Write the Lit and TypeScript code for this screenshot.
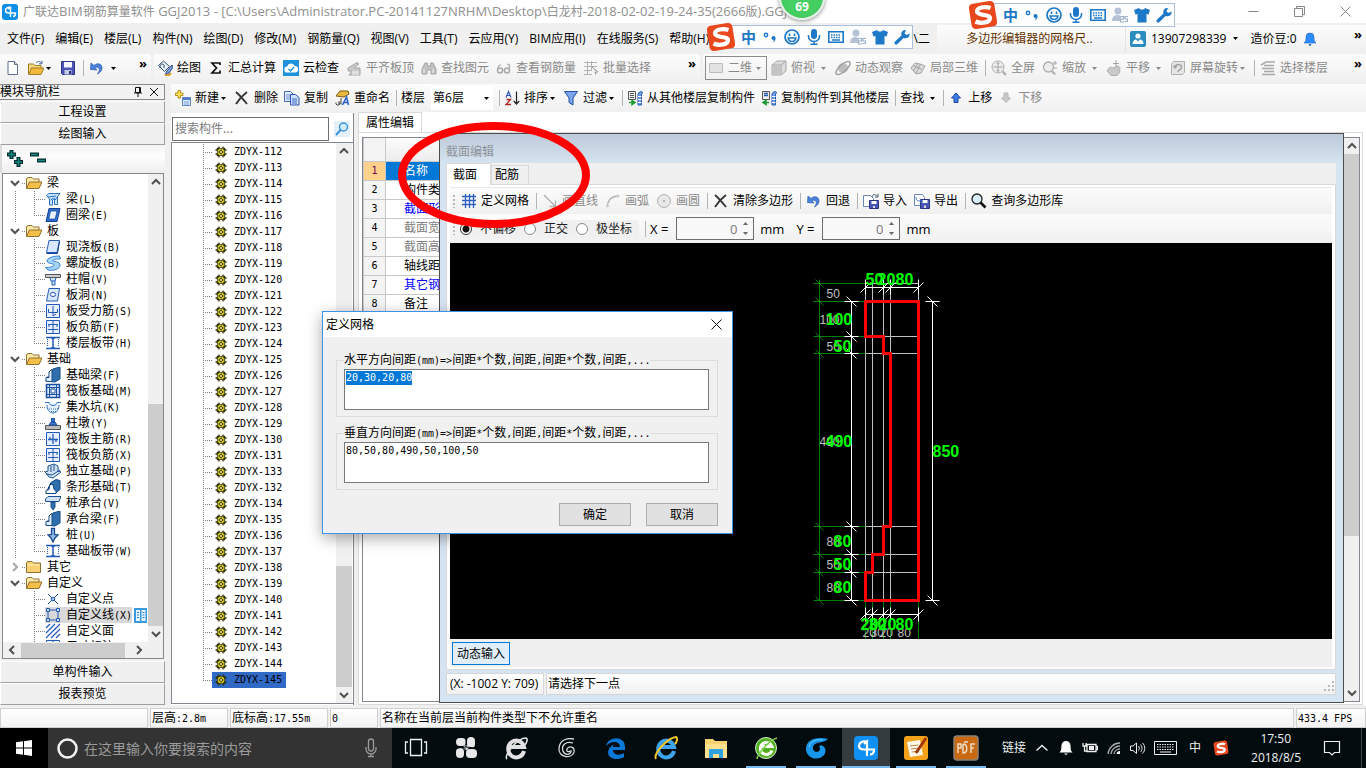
import { LitElement, html, css, svg, nothing } from "lit";
import { customElement } from "lit/decorators.js";
import { classMap } from "lit/directives/class-map.js";

const glyphs: Record<string, any> = {
  app: svg`<rect width="16" height="16" rx="3" fill="#0d8fe8"/><path d="M8.500 13V3.500L6 5M8.500 3.500C6 3 3.500 4 3.500 6.500S5 9 7 9h6.500c0 2-1 3.500-2.500 3.500" fill="none" stroke="#fff" stroke-width="1.500"/>`,
  doc: svg`<path d="M3 1.500h6.500l3 3v10H3z" fill="#fff" stroke="#5b6f8c"/><path d="M9.500 1.500v3h3" fill="#c9d9ee" stroke="#5b6f8c"/>`,
  open: svg`<path d="M.5 14V4h5l1.500 1.500h6V8" fill="#f7d884" stroke="#a37a20"/><path d="M.7 14.500 3.500 8H16l-3 6.500z" fill="#f0b93c" stroke="#a37a20"/><path d="M8 3c2-2 4-2 5.500 0M14 .800v3h-3" fill="none" stroke="#44649a"/>`,
  save: svg`<path d="M1.500 1.500h13v13h-12l-1-1z" fill="#4b55b5" stroke="#2c3482"/><path d="M4 2h8v5.500H4z" fill="#f4f6ff"/><path d="M4.500 10h7v4.500h-7z" fill="#c7cbe8"/><path d="M9 11h2v3H9z" fill="#2c3482"/>`,
  undo: svg`<path d="M5 5.500c4-3.500 8.500-1 8 3-.3 2.500-2 4-4.500 5.500 1.500-2.500 3-5 .5-6.500-1.500-.8-3 .2-3 .2L8 10 1.500 9.500 2 3z" fill="#4a82dc" stroke="#2b58ad" stroke-width=".7"/>`,
  paint: svg`<path d="M1.500 5.500 6.500 1l6 5.500-5 5z" fill="#e6eef7" stroke="#37506e"/><path d="M3 8c0-4 2-5 4-3v3" fill="none" stroke="#37506e"/><path d="m15 5-5 6-2 4 4-2 4-6z" fill="#7da2e3" stroke="#2a4a8a"/><path d="M8 15c3 .8 5 0 6-2" stroke="#d89c28" stroke-width="2" fill="none"/>`,
  sigma: svg`<path d="M12 5V3H4l4.500 5L4 13h8v-2.500" fill="none" stroke="#111" stroke-width="1.700"/>`,
  cloud: svg`<path d="M0 0h16v16H0z" fill="#1e93dc"/><path d="M4.500 12.500a3 3 0 0 1-.3-6A4 4 0 0 1 11.800 6a3.200 3.200 0 0 1 0 6.500z" fill="#fff"/><path d="m5.500 9 2 2 3.500-4" fill="none" stroke="#1e93dc" stroke-width="1.400"/>`,
  slab: svg`<path d="m2 8 9-5.500 2 1.500-5 4h6v7H3l3-4H2z" fill="#c9c9c9" stroke="#a5a5a5"/><path d="M6 12h7M6 14h7" stroke="#f3f3f3"/>`,
  binoc: svg`<path d="M4 3h2.500v3h3V3H12l3 6v5h-5v-4H6v4H1V9z" fill="#c2c2c2" stroke="#a4a4a4"/><path d="M3 9v4M12 9v4" stroke="#eee"/>`,
  glasses: svg`<circle cx="4" cy="10.500" r="2.500" fill="none" stroke="#aaa" stroke-width="1.500"/><circle cx="11" cy="10.500" r="2.500" fill="none" stroke="#aaa" stroke-width="1.500"/><path d="M2 9c0-3 1-4 3-4.500M13.500 11V5L11 4M6.500 10h2" fill="none" stroke="#aaa" stroke-width="1.200"/>`,
  batch: svg`<path d="M1 2.500h13M1 6.500h13M1 10.500h8M1 14.500h8M4.500 1v14M8.500 1v9" stroke="#b2b2b2" fill="none"/><path d="m9 7 6 5-3 .3 1 2.500" stroke="#999" fill="#e5e5e5"/>`,
  flat: svg`<path d="M1.500 3.500h13v9h-13z" fill="#e2e2e2" stroke="#bcbcbc"/>`,
  cube: svg`<path d="M1 5 6 1h9v10l-5 4H1z" fill="#dcdcdc" stroke="#a8a8a8"/><path d="M1 5h9v10M10 5l5-4" fill="none" stroke="#a8a8a8"/><path d="M1 5h9v10H1z" fill="#c4c4c4"/>`,
  orbit: svg`<circle cx="8" cy="8" r="5" fill="#bdbdbd"/><ellipse cx="8" cy="8" rx="9" ry="3.500" transform="rotate(-42 8 8)" fill="none" stroke="#a3a3a3" stroke-width="1.500"/>`,
  local: svg`<path d="m1 8 4-5 5 1 5 2-4 7-5 1z" fill="#dcdcdc" stroke="#a2a2a2"/><path d="m3 5.500 9 4M6 13.500 10.500 4M8 3.500 3.500 11" stroke="#a2a2a2" fill="none"/>`,
  full: svg`<circle cx="7" cy="7" r="6" fill="#ededed" stroke="#adadad"/><path d="M7 2.500v9M2.500 7h9M5.500 4 7 2.500 8.500 4M5.500 10 7 11.500 8.500 10" stroke="#a5a5a5" fill="none"/><path d="m11.500 11.500 3.500 3.500" stroke="#b5b5b5" stroke-width="2.500"/>`,
  zoom: svg`<circle cx="6.500" cy="7" r="5" fill="#ededed" stroke="#adadad" stroke-width="1.300"/><path d="m10 11 3 3.500" stroke="#b5b5b5" stroke-width="2.500"/><path d="M11 3h4M13 1v4M11 8h4" stroke="#a5a5a5"/>`,
  pan: svg`<path d="M3 8c2-2 3 0 4 0l5-2c3 1 1 4 2 6l-3 3.500H5L1 11z" fill="#c9c9c9" stroke="#adadad"/><path d="M10 0v7M7 3.500h6" stroke="#a5a5a5"/>`,
  rot: svg`<path d="M1.500 3.500 4 1.500h10.500v11l-2 2h-11z" fill="#e5e5e5" stroke="#b0b0b0"/><path d="M5 7c1-4 7-3 6.500.5C11 10 8 10 8 12M3.500 5.500 5 8l2-2" fill="none" stroke="#a3a3a3" stroke-width="1.500"/>`,
  floor: svg`<path d="m1 5 5-3h9M4 5.500h10M2 8.500h12M4 11.500h10M2 14.500h13" stroke="#a8a8a8" stroke-width="1.500" fill="none"/>`,
  add: svg`<path d="M7.500 7.500h8v8h-8z" fill="#dce9fb" stroke="#5f84c4"/><path d="M8 8h7v2H8z" fill="#4f7ed0"/><path d="M9 12h5M9 14h5" stroke="#7c9fd8"/><path d="M3 .5h2.500v2.500H8v2.500H5.500V8H3V5.500H.5V3H3z" fill="#ffe457" stroke="#a78612" stroke-width=".9"/>`,
  del: svg`<path d="M2 2c4 3.500 7 7 11 12M13 2C9 5 5 9 2 14" stroke="#333" stroke-width="1.800" fill="none"/>`,
  copy: svg`<path d="M.5 1.500h6l3 3v7h-9z" fill="#e3eeff" stroke="#4268b8"/><path d="M2 5h5M2 7h5M2 9h4" stroke="#6a8fd8"/><path d="M6.500 4.500h5l3.500 3v7.500H6.500z" fill="#cfe0fb" stroke="#2d55a8"/><path d="M8 9h5M8 11h5M8 13h5" stroke="#3f6cc4"/>`,
  rename: svg`<path d="m2 6 4-5h8l1 3-5 3z" fill="#e8b93c" stroke="#7b5c17"/><path d="M2 12.500a2 2 0 1 0 3-1v3.500M7 8v6.500" stroke="#444" fill="none"/><path d="m8.500 15 4-8 2 8M10 12.500h4" stroke="#2a5fc8" stroke-width="1.500" fill="none"/>`,
  sort: svg`<path d="m2 7.500 2.500-6L7 7.500M3 5.500h3" stroke="#2d56b0" stroke-width="1.200" fill="none"/><path d="M2.500 9.500h4l-4.500 5h5" stroke="#a82424" stroke-width="1.300" fill="none"/><path d="M12.500 1.500v12M9.800 11l2.700 3 2.700-3" stroke="#222" stroke-width="1.200" fill="none"/>`,
  filter: svg`<path d="M1.500 1.500h13L10 8v7l-4-2.500V8z" fill="#7ba6ee" stroke="#24509e"/>`,
  fromf: svg`<path d="M1.500 1.500h7v8h-7z" fill="#eee" stroke="#555"/><path d="M3 3.500h4M3 5.500h4M3 7.500h4" stroke="#555"/><path d="M11 4c1-3 5-3 4.500-1l-1 1v11H11z" fill="#6fa0e6" stroke="#2a5db0"/><path d="M11 6.500h3.500M11 9.500h3.500M11 12.500h3.500" stroke="#fff"/><path d="M2 12.500h4M5 10.500v4l3-2z" fill="#1f9d35" stroke="#1f9d35" stroke-width="1.500"/>`,
  tof: svg`<path d="M1.500 1.500h7v8h-7z" fill="#eee" stroke="#555"/><path d="M3 3.500h4M3 5.500h4" stroke="#2a5db0" stroke-width="1.400"/><path d="M11 4c1-3 5-3 4.500-1l-1 1v11H11z" fill="#6fa0e6" stroke="#2a5db0"/><path d="M11 6.500h3.500M11 9.500h3.500M11 12.500h3.500" stroke="#fff"/><path d="M4 12.500h4M5 10.500v4l-3-2z" fill="#1f9d35" stroke="#1f9d35" stroke-width="1.500"/>`,
  up: svg`<path d="M8 3 3.500 8H6v4.500h4V8h2.500z" fill="#3f7be0" stroke="#1d4aa5"/>`,
  down: svg`<path d="M8 12.500 3.500 8H6V3h4v5h2.500z" fill="#c9c9c9" stroke="#b5b5b5"/>`,
  search: svg`<path d="M0 0h16v16H0z" fill="#e4f1fb"/><circle cx="9.500" cy="6" r="4" fill="#d5ecff" stroke="#3c93da" stroke-width="1.500"/><path d="m6.500 9-4.500 5" stroke="#3c93da" stroke-width="2"/>`,
  grid: svg`<path d="M1 3.500h14M1 7.500h14M1 11.500h14M4.500 1v14M8.500 1v14M12.500 1v14" stroke="#2f62c0" stroke-width="1.300" fill="none"/>`,
  line: svg`<path d="m2 2 11 11M13.500 7.500v6h-6" stroke="#b0b0b0" stroke-width="1.300" fill="none"/>`,
  arc: svg`<path d="M2 14C3 7 7 3 13 3" stroke="#b0b0b0" stroke-width="1.300" fill="none"/><circle cx="2.500" cy="13" r="1.500" fill="#ccc"/><circle cx="13" cy="3" r="1.500" fill="#ccc"/>`,
  circ: svg`<circle cx="8" cy="8" r="6.500" fill="#e8e8e8" stroke="#b0b0b0"/><circle cx="8" cy="8" r="1" fill="#999"/>`,
  imp: svg`<path d="M.5 2.500h7l3 3v8H.5z" fill="#fff" stroke="#6c88b8"/><path d="M6.500 7.500h9v8h-9z" fill="#4b55b5" stroke="#2c3482"/><path d="M8.500 8h5v3h-5z" fill="#fff"/><path d="M10 13h2v2h-2z" fill="#ddd"/><path d="M9 4c1-3 3-3 5-1M15 .800V4h-3" stroke="#44546a" fill="none"/>`,
  exp: svg`<path d="M.5 1.500h8l2 3v8H.5z" fill="#fff" stroke="#6c88b8"/><path d="M6.500 6.500h9v9h-9z" fill="#4b55b5" stroke="#2c3482"/><path d="M8.500 7h5v3h-5z" fill="#fff"/><path d="M10 12.500h2V15h-2z" fill="#ddd"/><path d="M2 4c0 4 2 4 6 4M6 5.500 8.500 8 6 10.500" stroke="#3f6cc4" fill="none"/>`,
  lens: svg`<circle cx="6" cy="6" r="5" fill="#d9edfa" stroke="#222" stroke-width="1.300"/><path d="m9.500 9.500 5 5" stroke="#111" stroke-width="2.600"/>`,
  folder: svg`<path d="M.5 13.500v-10L2 2.500h4l1.500 1.500H13v3" fill="#fbe7a6" stroke="#8f7130"/><path d="M.5 13.500 3.500 7H16l-3 6.500z" fill="#f4c04a" stroke="#8f7130"/>`,
  folderc: svg`<path d="M.5 13.500v-10L2 2.500h4l1.500 1.500h7v9.500z" fill="#f8d071" stroke="#8f7130"/><path d="M1.500 6h12" stroke="#fff0bd"/>`,
  beam: svg`<path d="M1.500 4.500 4 2.500h11l-2.500 3v8h-3v-6l-2 1.500v5h-3V8z" fill="#cfe5fb" stroke="#2471c4"/><path d="m3 6 8-1M5.500 9l3-2M10 9l3-4" stroke="#2471c4"/>`,
  ring: svg`<path d="M4 1.500h11l-3 13H1z" fill="#2e6fd0" stroke="#123e94"/><path d="M5.500 4h6.500l-1.800 8H3.800z" fill="#eaf3ff" stroke="#123e94" stroke-width=".7"/>`,
  plate: svg`<path d="M4 1.500h10.500l-2.500 12H1.500z" fill="#d7e8ff" stroke="#2459ba"/><path d="M1.500 14.500h11l2-12" stroke="#123e94" fill="none"/>`,
  spiral: svg`<path d="M14.500 1C8 1 2 3 2 6s7 2 7 4-5 2.500-8.500 2.500L3 15c6 1 12-1 12-5S8 7 8 5.500 12 4 15.500 4z" fill="#a9d4fa" stroke="#2f7fd2"/>`,
  cap: svg`<path d="M.5 3.500h15v3H.5z" fill="#ccc" stroke="#555"/><path d="m5 7 1 3h4l1-3M7 10v4h3v-4" fill="#cfe5fb" stroke="#1f5fc0"/>`,
  hole: svg`<path d="M4 1.500h10.500l-2 12.500H1.500z" fill="#d7e8ff" stroke="#2459ba"/><ellipse cx="8" cy="7.500" rx="2.700" ry="2" fill="#fff" stroke="#2459ba"/>`,
  rebar: svg`<path d="M1.500 1.500h13v13h-13z" fill="#e6f0ff" stroke="#2459ba"/><path d="M8 3v10M3.500 6v3.500h9V6M8 13l3-2" stroke="#2459ba" fill="none"/>`,
  rebar2: svg`<path d="M1.500 1.500h13v13h-13z" fill="#e6f0ff" stroke="#2459ba"/><path d="M8 2v12M3 5.500h10M3 10.500h10M4 5v3M12 5v3" stroke="#2459ba" fill="none"/>`,
  strip: svg`<path d="M1 2.500h14M1 13.500h14" stroke="#2459ba" stroke-width="1.500"/><path d="M8 3v10M6 3h4M6 13h4" stroke="#2459ba" stroke-width="1.500"/><path d="M2.500 4v8M13.500 4v8" stroke="#2459ba" stroke-dasharray="1 1"/>`,
  fbeam: svg`<path d="m1 14 1-4h3l3-8 7-2v12l-5 3z" fill="#2f6fae" stroke="#164a86"/><path d="M1 14.500v-4h3V5l3-3v12.500z" fill="#e3eefb" stroke="#164a86"/>`,
  raft: svg`<path d="M1.500 1.500h13v13h-13z" fill="#d7e8ff" stroke="#1c4f9e" stroke-width="1.500"/><path d="M4.500 2v12M11.500 2v12M2 4.500h12M2 11.500h12" stroke="#1c4f9e"/><path d="M6 6h4v4H6z" fill="#fff" stroke="#1c4f9e"/>`,
  pit: svg`<path d="M0 3.500h4c0 4 8 4 8 0h4M2 6c0 4 2 8 6 8s6-4 6-8" fill="#e4f0ff" stroke="#2f6fc4"/><path d="M4 10h9M6 12.500h5" stroke="#2f6fc4" stroke-dasharray="1 1"/>`,
  pier: svg`<path d="M.5 10.500h15v4H.5z" fill="#bbb" stroke="#555"/><path d="m4 10 2-3h4l2 3zM6.500 3.500h3V7h-3z" fill="#3d78d4" stroke="#1c4f9e"/>`,
  bars: svg`<path d="M1.500 1.500h13v13h-13z" fill="#e6f0ff" stroke="#2459ba"/><path d="M8 3v10M3 8.500h10M5 6v2M11 8v3" stroke="#2459ba" stroke-width="1.300" fill="none"/>`,
  single: svg`<path d="m0 9 3-1V3l6-2 4 2v5l3 1-8 6-4-1z" fill="#cfe2f5" stroke="#1d4f8c"/><path d="m1 11 6 1 8-5M6 3v6M9 2v6" stroke="#1d4f8c" fill="none"/>`,
  stripf: svg`<path d="m1 14.500 2-5 3-6 5-3 4 1v9l-5 4z" fill="#2f6fae" stroke="#164a86"/><path d="M1 14.500v-3l3-1 1-5h3l1 5 2 1v3z" fill="#fff" stroke="#164a86"/>`,
  pcap: svg`<path d="M.5 4 3 1.500h13L14 6.500H.5z" fill="#cfe2f5" stroke="#1d4f8c"/><path d="M6 7h4v5l-2 3-2-3z" fill="#2f6fae" stroke="#164a86"/>`,
  pile: svg`<path d="M6.500 1.500h3v6l3.500.5-3 3-2 4-2-4-3-3 3.500-.5z" fill="#8fb8e4" stroke="#174b8c" stroke-width="1.300"/>`,
  pt: svg`<path d="m3 3 4 4M13 3 9 7M3 13l4-4M13 13 9 9" stroke="#174b8c"/><circle cx="8" cy="8" r="1.800" fill="#9cc8f5" stroke="#2459ba"/>`,
  poly: svg`<path d="M3 3h10v10H3z" fill="none" stroke="#2459ba"/><path d="M1.500 1.500h3v3h-3zM11.500 1.500h3v3h-3zM1.500 11.500h3v3h-3zM11.500 11.500h3v3h-3z" fill="#cfe2ff" stroke="#2459ba"/>`,
  hatch: svg`<path d="m1 5 4-4M1 10 10 1M1 15 15 1M6 15l9-9M11 15l4-4" stroke="#2459ba" fill="none" stroke-width="1.200"/>`,
  gear: svg`<path d="M6 2.500v11M10 2.500v11M2.500 6h11M2.500 10h11M4 4l8 8M12 4l-8 8" stroke="#2b2900" stroke-width="1.300"/><circle cx="8" cy="8" r="3.800" fill="#e9e11a" stroke="#2b2900" stroke-width=".8"/><path d="M8 4.500v7M4.500 8h7" stroke="#6d6800" stroke-width=".8"/><circle cx="8" cy="8" r="1.500" fill="#fff78a" stroke="#2b2900" stroke-width=".9"/>`,
  user: svg`<rect width="16" height="16" rx="2" fill="#2b8cbf"/><circle cx="8" cy="5" r="2.600" fill="#fff"/><path d="M2.500 13c0-3 2-4.500 3.500-4.500l2 2 2-2c2 0 3.500 1.500 3.500 4.500z" fill="#fff"/>`,
  bell: svg`<path d="M2 12c2-1.500 2-3 2-6a4 4 0 0 1 8 0c0 3 0 4.500 2 6z" fill="#2b8cff" stroke="#1c62c0" stroke-width=".6"/><path d="M6.500 13h3l-1.500 2.500z" fill="#1c62c0"/>`,
};

const blue = "#1e78c8";
const ime: Record<string, any> = {
  punc: svg`<circle cx="4" cy="6" r="1.700" fill="none" stroke=${blue} stroke-width="1.400"/><circle cx="11.500" cy="9" r="2" fill=${blue}/><path d="M13.500 9c0 3-1.500 4-3 4.500 1-1 1.500-2 1.300-3z" fill=${blue}/>`,
  smile: svg`<circle cx="8" cy="8" r="7" fill="none" stroke=${blue} stroke-width="1.700"/><path d="M5.500 4.500v2.500M10.500 4.500v2.500" stroke=${blue} stroke-width="1.600"/><path d="M4 9c1 4.500 7 4.500 8 0z" fill="none" stroke=${blue} stroke-width="1.400"/>`,
  mic: svg`<rect x="5" y="0" width="6" height="10" rx="3" fill=${blue}/><path d="M2.500 6v1.500a5.500 5 0 0 0 11 0V6M8 12.500V15M4.500 15.300h7" fill="none" stroke=${blue} stroke-width="1.500"/>`,
  keys: svg`<path d="M.8 2.800h14.400v10.400H.8z" fill="none" stroke=${blue} stroke-width="1.600"/><path d="M3 6h10M3 8.500h10" stroke=${blue} stroke-width="1.500" stroke-dasharray="1.500 1"/><path d="M4 11h8" stroke=${blue} stroke-width="1.500"/>`,
  who: svg`<circle cx="6" cy="4" r="3.500" fill="#b6c3d6"/><path d="M0 14c0-5 3-6 6-6l3 1v5z" fill="#b6c3d6"/><path d="M8.500 9.500h3v2.500h-3V15h3.500M16 9.500h-3V12h2.500v2.500H12.500" stroke="#9eb0c8" fill="none" stroke-width="1.200"/>`,
  shirt: svg`<path d="M0 3 5 1c1 2 5 2 6 0l5 2-1.500 4.500L12.500 7v8.500h-9V7l-2 .5z" fill=${blue}/>`,
  wrench: svg`<path d="M15.500 4.500 12.500 6 10.500 4.500 12 1C8.500.5 6.500 3.500 7.500 6.500L1 12.500c-1.500 2 .5 4 2.500 2.500L9.500 9c3.500 1 6.500-1 6-4.500z" fill=${blue}/>`,
};
const sogou = svg`<rect x="2" y="2" width="24" height="24" rx="4" transform="rotate(-9 14 14)" fill="#e8481c"/><path d="M21 7.500C16 5.500 8 7 8.500 11s12 2 12 6-8 5.500-13.500 3" fill="none" stroke="#fff" stroke-width="4"/>`;

const task: Record<string, any> = {
  view: svg`<path d="M7.500 4.500h11v16h-11zM5 7H2.500v11H5M21 7h2.500v11H21" fill="none" stroke="#eee" stroke-width="1.300"/>`,
  petal: svg`<g fill="#e8e8e8"><rect x="3" y="3" width="10" height="8" rx="4"/><rect x="14" y="2" width="8" height="11" rx="4"/><rect x="3" y="13" width="8" height="10" rx="4"/><rect x="13" y="14" width="11" height="9" rx="4"/></g><circle cx="13" cy="12.500" r="2.500" fill="#e8e8e8"/><path d="M13 3v9l-9 1M13 12l9 1M12 13v10" stroke="#000c10" fill="none"/>`,
  ie: svg`<path d="M21 16A8 8.500 0 1 1 21 12H7" fill="none" stroke="#e2e2e2" stroke-width="4"/><path d="M4 24C0 21 14 3 23 3c2 1 1 4-1 7" fill="none" stroke="#e2e2e2" stroke-width="1.600"/>`,
  swirl: svg`<path d="M21 4c-6-1-14 0-15 9s12 12 15 4c1-5-5-7-7-3-1 3 2 3 3 2M20 8c-7-2-12 2-10 8 2 5 9 4 8-1" fill="none" stroke="#ddd" stroke-width="1.300"/>`,
  edge: svg`<path d="M3 11C5 1 22 0 22 12v3H10c0 5 7 6 11 3v4C12 27 2 22 6 14c1-2 3-4 6-5-2 1-2 2-2 3h7c0-6-9-7-14-1z" fill="#0a78d7"/>`,
  ie2: svg`<path d="M21 16A8 8.500 0 1 1 21 12H7" fill="none" stroke="#3fa2ec" stroke-width="4"/><path d="M3 24C0 19 14 3 23 2c2 1 1 5-1 7" fill="none" stroke="#f3c62c" stroke-width="2"/>`,
  files: svg`<path d="M2 4h8l2 2h12v17H2z" fill="#f7d36f"/><path d="M2 9h22v14H2z" fill="#fde08e"/><path d="M6 14h14v9h-4v-4h-6v4H6z" fill="#2fa3df"/>`,
  green: svg`<circle cx="13" cy="13" r="10.500" fill="#4fae22" stroke="#d7f0c8"/><path d="M19 15.500a6 6 0 1 1 0-4H8" fill="none" stroke="#fff" stroke-width="3"/><path d="M4 24c0-4 12-19 20-21" stroke="#7ad04a" stroke-width="1.500" fill="none"/>`,
  gblue: svg`<path d="M25 4C14 1 3 4 3 14c0 9 12 13 18 6 4-6-1-11-5-9 2 2 1 6-2 6-5 0-6-7 0-9 4-1 8-1 11-4z" fill="#1596ea"/><path d="M6 12c1-6 8-8 14-7" stroke="#6fd0ff" fill="none"/>`,
  glo: svg`<rect x="1" y="1" width="24" height="24" rx="4" fill="#1090f2"/><path d="M14 21V6.500L11 9M14 6.500C9 5.500 6 8 6 11s2 3.500 5 3.500h10c0 3-1.500 5-4 5" fill="none" stroke="#fff" stroke-width="2.200"/>`,
  note: svg`<rect x="1" y="1" width="24" height="24" rx="3" fill="#f5a21b"/><path d="m4 7 13-2 3 15-13 2z" fill="#fff8e8"/><path d="m7 11 8-1M8 14l8-1M9 17l6-1" stroke="#b98a50"/><path d="M23 3 13 18" stroke="#a3360c" stroke-width="3"/>`,
  pdf: svg`<rect x="1" y="1" width="24" height="24" rx="3" fill="#c96a12" stroke="#8a8178" stroke-width="1.500"/><path d="M5 18V9h3v4H5m5-4v9c5 0 5-9 0-9m8 9V9h4m-4 4h3M11 7h4" fill="none" stroke="#ecd9c4" stroke-width="1.500"/>`,
};

const ic = (n: string) => html`<svg class="ic" viewBox="0 0 16 16" aria-hidden="true">${glyphs[n]}</svg>`;
const arrow = html`<svg class="ar" viewBox="0 0 5 3" aria-hidden="true"><path d="M0 0h5L2.500 3z" fill="currentColor"/></svg>`;
const chev = (d: string) => html`<svg class="cv" viewBox="0 0 10 10" aria-hidden="true"><path d=${{
  up: "M1 7l4-4 4 4", down: "M1 3l4 4 4-4", left: "M7 1 3 5l4 4", right: "M3 1l4 4-4 4",
}[d]!} fill="none" stroke="currentColor" stroke-width="2"/></svg>`;
// Latin runs use their own face and size beside the full-width ideographs.
const latin = (t: string, c: string) => t.split(/([\x20-\x7e]+)/).map((p, i) => (i % 2 ? html`<span class=${c}>${p}</span>` : p));
const mono = (t: string) => latin(t, "m");

type Tool = { i?: string; t?: string; off?: boolean; a?: "w" | "n" };
const tool = (x: Tool | "|") =>
  x === "|"
    ? html`<span class="sep"></span>`
    : html`<button class=${classMap({ tool: true, off: !!x.off })} ?disabled=${x.off} aria-label=${x.t ?? x.i ?? ""}>
        ${x.i ? ic(x.i) : nothing}${x.t ? html`<span>${x.t}</span>` : nothing}${x.a ? html`<span class="drop ${x.a}">${arrow}</span>` : nothing}
      </button>`;

const tree: [string, boolean, [string, string][]][] = [
  ["梁", true, [["beam", "梁(L)"], ["ring", "圈梁(E)"]]],
  ["板", true, [["plate", "现浇板(B)"], ["spiral", "螺旋板(B)"], ["cap", "柱帽(V)"], ["hole", "板洞(N)"], ["rebar", "板受力筋(S)"], ["rebar2", "板负筋(F)"], ["strip", "楼层板带(H)"]]],
  ["基础", true, [["fbeam", "基础梁(F)"], ["raft", "筏板基础(M)"], ["pit", "集水坑(K)"], ["pier", "柱墩(Y)"], ["bars", "筏板主筋(R)"], ["rebar2", "筏板负筋(X)"], ["single", "独立基础(P)"], ["stripf", "条形基础(T)"], ["pcap", "桩承台(V)"], ["fbeam", "承台梁(F)"], ["pile", "桩(U)"], ["strip", "基础板带(W)"]]],
  ["其它", false, []],
  ["自定义", true, [["pt", "自定义点"], ["poly", "自定义线(X)"], ["hatch", "自定义面"], ["rebar2", "尺寸标注(W)"]]],
];
const parts = [...Array(34)].map((_, i) => 112 + i).map((n) => (n === 132 ? 133 : n === 133 ? 132 : n));
const props: [string, string][] = [["名称", "sel"], ["构件类型", ""], ["截面形状", "key"], ["截面宽度(mm)", "dim"], ["截面高度(mm)", "dim"], ["轴线距左边", ""], ["其它钢筋", "key"], ["备注", ""]];

const shared = css`
  * { box-sizing: border-box; }
  button, input, textarea, select { font: inherit; color: inherit; margin: 0; padding: 0; border: 0; background: none; border-radius: 0; outline: none; }
  button { white-space: nowrap; }
  .m { font-family: "DejaVu Sans Mono", monospace; font-size: 10px; white-space: pre; }
  .l { font-size: 13px; white-space: pre; }
  .ic { width: 16px; height: 16px; flex: none; display: block; }
  .ar { width: 5px; height: 3px; display: block; }
  .cv { width: 10px; height: 10px; display: block; color: #505050; }
  .tool { display: flex; align-items: center; gap: 4px; height: 24px; flex: none; }
  .tool.off { color: #8a8a8a; }
  .drop { display: flex; justify-content: center; margin-left: -4px; }
  .drop.w { width: 13px; padding-left: 3px; }
  .drop.n { width: 9px; }
  .sep { width: 1px; height: 16px; background: #b4b4b4; margin-right: -2px; flex: none; }
  .bar { display: flex; align-items: center; gap: 7px; background: linear-gradient(#fcfcfc, #f0f0f0); white-space: nowrap; }
  .grip { width: 2px; height: 13px; flex: none; background: repeating-linear-gradient(#b8b8b8 0 2px, transparent 2px 4px); }
  .more { align-self: flex-start; padding-top: 3px; }
`;

@customElement("ime-bar")
class ImeBar extends LitElement {
  static styles = [shared, css`
    :host { display: flex; align-items: center; width: 192px; height: 24px; background: #fdfdfe; border: 1px solid #a9c0d8; padding-left: 19px; gap: 6px; }
    .logo { position: absolute; left: -16px; top: -4px; width: 30px; height: 30px; }
    .zh { color: #1e78c8; font: bold 15px/20px "Noto Sans CJK SC", sans-serif; }
  `];
  render() {
    return html`<svg class="logo" viewBox="0 0 28 28">${sogou}</svg><span class="zh">中</span>
      ${Object.keys(ime).map((k) => html`<svg class="ic" viewBox="0 0 16 16">${ime[k]}</svg>`)}`;
  }
}

@customElement("section-canvas")
class SectionCanvas extends LitElement {
  static styles = css`
    :host { display: block; background: #000; overflow: hidden; }
    svg { display: block; }
    .g { font: 12px "Liberation Sans", sans-serif; fill: #c0c0c0; }
    .b { font: bold 16px "Liberation Sans", sans-serif; fill: #0f0; }
  `;
  render() {
    const ys = [283, 301, 336, 353, 526, 554, 572, 600];
    const xs = [865, 872, 883, 890, 918];
    const tx = (c: string, l: [number, number, string][]) => l.map(([x, y, t]) => svg`<text class=${c} x=${x} y=${y}>${t}</text>`);
    const grey = [
      ...xs.map((x) => `M${x} 283V600`), "M865 283H918", ...ys.slice(1).map((y) => `M865 ${y}H918`),
    ].join("");
    const green = ["M819 279V600", ...ys.map((y) => `M813 ${y}H865M815 ${y - 4}l8 8`), ...xs.map((x) => `M${x} 601V640`)].join("");
    const white = [
      "M851 301V600M932 301V600M865 287H918M865 614H918",
      ...ys.slice(1).map((y) => `M844 ${y}H858M846 ${y - 5}l10 10`),
      ...[301, 600].map((y) => `M925 ${y}H939M927 ${y - 5}l10 10`),
      ...[865, 883, 890, 918].map((x) => `M${x} 279V294M${x - 5} 292l10 -10`),
      ...xs.map((x) => `M${x} 607V621M${x - 5} 619l10 -10`),
    ].join("");
    return html`<svg width="882" height="397" viewBox="449.500 242.500 882 397">
      <g fill="none" stroke-width="1"><path d=${grey} stroke="#c0c0c0"/><path d=${green} stroke="#008000"/><path d=${white} stroke="#fff"/></g>
      <path d="M865 301H918V600H865V572H872V554H883V526H890V353H883V336H865Z" fill="none" stroke="#f00" stroke-width="3"/>
      ${tx("g", [[826, 297, "50"], [819, 323, "100"], [826, 350, "50"], [819, 445, "490"], [826, 545, "80"], [826, 568, "50"], [826, 591, "80"], [862, 636, "20"], [870, 636, "30"], [879, 636, "20"], [897, 636, "80"]])}
      ${tx("b", [[865, 284, "50"], [877, 284, "20"], [895, 284, "80"], [825, 324, "100"], [833, 351, "50"], [825, 446, "490"], [833, 546, "80"], [833, 569, "50"], [833, 592, "80"], [932, 456, "850"], [860, 629, "20"], [868, 629, "30"], [878, 629, "20"], [895, 629, "80"]])}
    </svg>`;
  }
}

@customElement("section-window")
class SectionWindow extends LitElement {
  static styles = [shared, css`
    :host { display: flex; flex-direction: column; border: 1px solid #4c4c4c; background: #d6e3f1; padding: 0 7px 7px 6px; }
    .title { height: 29px; margin: 0 -7px 0 -6px; padding: 10px 6px 0; background: linear-gradient(#bccad9, #d6e3f1); color: #8d9298; line-height: 16px; flex: none; }
    .tabs { display: flex; align-items: flex-end; height: 22px; background: #f0f0f0; border-bottom: 1px solid #d9d9d9; flex: none; }
    .tab { height: 19px; width: 38px; border: 1px solid #d9d9d9; border-bottom: 0; background: #f0f0f0; text-align: left; padding-left: 3px; }
    .tab.on { height: 22px; width: 45px; background: #fff; margin-bottom: -1px; padding-left: 6px; }
    .page { flex: 1; min-height: 0; display: flex; flex-direction: column; background: #fff; border: 1px solid #d9d9d9; border-top: 0; padding: 2px 3px; }
    .a { height: 27px; padding-left: 3px; border-top: 1px solid #e8e8e8; gap: 7px; flex: none; }
    .a .grip { margin-right: -1px; }
    .b { height: 29px; padding-left: 3px; gap: 6px; flex: none; }
    .radios { display: flex; align-items: center; background: #f0f0f0; height: 18px; gap: 8px; width: 179px; margin-left: -1px; }
    label { display: flex; align-items: center; gap: 8px; }
    .radios label { color: #222; }
    input[type="radio"] { appearance: none; width: 12px; height: 12px; border: 1px solid #8a8a8a; border-radius: 6px; background: #fff; }
    input[type="radio"]:checked { border-color: #333; background: radial-gradient(#111 0 3px, #fff 4px); }
    .spin { display: flex; width: 78px; height: 23px; border: 1px solid #6d6d6d; background: #f8f8f8; color: #777; }
    .spin input { width: 60px; text-align: right; font-size: 13px; }
    .ud { flex: 1; display: flex; flex-direction: column; justify-content: space-around; align-items: center; color: #666; }
    .ud .ar:first-child { transform: rotate(180deg); }
    section-canvas { flex: 1; min-height: 0; }
    .foot { background: #f0f0f0; padding: 3px 2px 3px; height: 28px; flex: none; }
    .foot button { width: 58px; height: 23px; border: 1px solid #0078d7; background: #e1eef8; }
    .status { display: flex; gap: 2px; margin-top: 3px; background: #f0f0f0; height: 22px; flex: none; }
    .status div { border: 1px solid #d7d7d7; background: linear-gradient(#fff, #f1f1f1); padding: 2px 3px; line-height: 16px; white-space: nowrap; }
    .xy { width: 98px; }
    .status .msg { flex: 1; display: flex; justify-content: space-between; padding-left: 1px; padding-right: 0; }
    .size { align-self: flex-end; width: 12px; height: 12px; }
  `];
  render() {
    const t: (Tool | "|")[] = [{ i: "grid", t: "定义网格" }, "|", { i: "line", t: "画直线", off: true }, { i: "arc", t: "画弧", off: true }, { i: "circ", t: "画圆", off: true }, "|", { i: "del", t: "清除多边形" }, "|", { i: "undo", t: "回退" }, "|", { i: "imp", t: "导入" }, { i: "exp", t: "导出" }, "|", { i: "lens", t: "查询多边形库" }];
    const spin = (l: string) => html`<label><span class="l">${l}</span><span class="spin"><input value="0" /><span class="ud">${arrow}${arrow}</span></span></label><span class="l">mm</span>`;
    return html`
      <div class="title">截面编辑</div>
      <div class="tabs"><button class="tab on">截面</button><button class="tab">配筋</button></div>
      <div class="page">
        <div class="bar a"><span class="grip"></span>${t.map(tool)}</div>
        <div class="bar b"><span class="grip"></span>
          <div class="radios">${["不偏移", "正交", "极坐标"].map((r, i) => html`<label><input type="radio" name="off" ?checked=${i === 0} />${r}</label>`)}</div>
          <span class="sep"></span>${spin("X =")}<span></span>${spin("Y =")}
        </div>
        <section-canvas></section-canvas>
        <div class="foot"><button>动态输入</button></div>
      </div>
      <div class="status"><div class="xy">(X: -1002 Y: 709)</div><div class="msg">请选择下一点
        <svg class="size" viewBox="0 0 12 12"><path d="M9 1h2v2H9zM5 5h2v2H5zM9 5h2v2H9zM1 9h2v2H1zM5 9h2v2H5zM9 9h2v2H9z" fill="#bbb"/></svg></div></div>`;
  }
}

@customElement("grid-dialog")
class GridDialog extends LitElement {
  static styles = [shared, css`
    :host { display: block; background: #f0f0f0; border: 1px solid #3c93e8; box-shadow: 0 4px 14px rgba(0, 0, 0, 0.35); }
    .title { display: flex; justify-content: space-between; align-items: center; height: 25px; background: #fff; padding: 0 10px 0 3px; }
    .title svg { width: 11px; height: 11px; display: block; }
    .body { padding: 15px 14px 8px 13px; }
    fieldset { margin: 0 0 8px; padding: 0 8px 8px 7px; border: 1px solid #dcdcdc; min-width: 0; height: 65px; }
    fieldset + fieldset { margin-bottom: 13px; }
    legend { padding: 0; line-height: 16px; width: 306px; white-space: nowrap; }
    textarea { display: block; width: 100%; height: 41px; border: 1px solid #7a7a7a; background: #fff; resize: none; padding: 1px; font: 10px/14px "DejaVu Sans Mono", monospace; caret-color: #ff8728; }
    textarea::selection { background: #0078d7; color: #fff; }
    .btns { display: flex; justify-content: flex-end; gap: 15px; }
    .btns button { width: 72px; height: 23px; background: #e1e1e1; border: 1px solid #adadad; }
  `];
  firstUpdated() {
    const first = this.renderRoot.querySelector("textarea")!;
    first.focus();
    first.select();
  }
  render() {
    const box = (id: string, l: string, v: string) => html`<fieldset><legend><label for=${id}>${mono(l + "方向间距(mm)=>间距*个数,间距,间距*个数,间距,...")}</label></legend><textarea id=${id} spellcheck="false" .value=${v}></textarea></fieldset>`;
    return html`<div class="title"><span>定义网格</span><button aria-label="关闭"><svg viewBox="0 0 11 11"><path d="m.5.5 10 10M10.500.5l-10 10" stroke="#111" fill="none"/></svg></button></div>
      <div class="body">${box("h", "水平", "20,30,20,80")}${box("v", "垂直", "80,50,80,490,50,100,50")}
        <div class="btns"><button>确定</button><button>取消</button></div></div>`;
  }
}

@customElement("app-root")
class AppRoot extends LitElement {
  static styles = [shared, css`
    :host { display: flex; flex-direction: column; height: 100vh; position: relative; overflow: hidden; background: #f0f0f0; color: #000; font: 12px/16px "Open Sans", "Noto Sans CJK SC", sans-serif; }
    .titlebar { display: flex; align-items: center; height: 23px; background: #fff; padding-left: 2px; gap: 5px; color: #8f8f8f; flex: none; }
    .titlebar .name { flex: 1; white-space: nowrap; }
    .wc { width: 41px; display: flex; justify-content: center; }
    .wc svg { width: 11px; height: 11px; }
    .menus { display: flex; height: 31px; flex: none; align-items: center; padding-left: 7px; overflow: hidden; }
    .menus nav { display: flex; gap: 11px; flex: 1; padding-right: 6px; overflow: hidden; }
    .menus nav button { flex: none; }
    .tail { flex: none; padding-right: 7px; }
    .tip { width: 188px; height: 27px; justify-content: center; color: #663300; padding-right: 3px; flex: none; }
    .acct { width: 241px; height: 27px; padding: 0 4px; gap: 5px; flex: none; border-left: 1px solid #e4e4e4; }
    .acct .more { margin-left: auto; }
    .row1 { display: flex; gap: 3px; height: 29px; flex: none; }
    .row1 .bar { height: 28px; border-radius: 2px; }
    .f1 { width: 151px; padding-left: 5px; }
    .f2 { width: 546px; padding-left: 3px; }
    .f3 { flex: 1; padding: 0 4px 0 2px; }
    .bar .more { margin-left: auto; padding-right: 4px; }
    .acct .more, .f3 .more { padding-right: 0; }
    .more { font-weight: bold; font-size: 13px; line-height: 12px; }
    .dim2 { display: flex; align-items: center; gap: 4px; width: 62px; height: 24px; border: 1px solid #8c8c8c; color: #8a8a8a; padding: 0 5px 0 2px; margin-right: -3px; }
    select { appearance: none; }
    .dim2 select { flex: 1; width: 24px; opacity: 1; }
    .lower { flex: 1; display: flex; min-height: 0; }
    .nav { width: 165px; display: flex; flex-direction: column; flex: none; }
    .nav h2 { margin: 1px 0; font-size: 12px; font-weight: 400; line-height: 14px; height: 16px; border: 1px solid #888; border-left: 0; display: flex; align-items: center; background: #f2f2f2; flex: none; }
    .nav h2 span { flex: 1; white-space: nowrap; }
    .nav h2 svg { width: 12px; height: 12px; margin-right: 4px; }
    .big { height: 22px; border: 1px solid #a0a0a0; border-top-color: #fff; border-left-color: #fff; background: #f0f0f0; flex: none; }
    .exp { height: 28px; flex: none; background: linear-gradient(#f4f4f4, #fdfdfd 40%, #eeeeee); display: flex; align-items: center; padding-left: 5px; border-left: 2px solid #ddd; }
    .exp svg { width: 42px; height: 18px; }
    .tree { margin: 0 1px 2px 2px; border: 1px solid #828790; background: #f0f0f0; flex: 1; min-height: 0; display: grid; grid-template: minmax(0, 1fr) 16px / minmax(0, 1fr) 15px; }
    .rows { background: #fff; overflow: hidden; padding-top: 1px; }
    .r { display: flex; height: 16px; align-items: center; white-space: nowrap; }
    .p .cv { margin-left: 7px; }
    .shut .cv { color: #a6a6a6; }
    .dots { width: 5px; height: 1px; margin: 0 0 0 1px; background: repeating-linear-gradient(90deg, transparent 0 1px, #808080 1px 2px); }
    .rail { width: 19px; height: 16px; margin-left: 12px; flex: none; }
    .rail.on { background: repeating-linear-gradient(#808080 0 1px, transparent 1px 2px) 0 0 / 1px 100% no-repeat; }
    .elbow { width: 11px; height: 16px; flex: none; background: repeating-linear-gradient(#808080 0 1px, transparent 1px 2px) 0 0 / 1px 100% no-repeat, repeating-linear-gradient(90deg, #808080 0 1px, transparent 1px 2px) 0 8px / 100% 1px no-repeat; }
    .elbow.end { background-size: 1px 8px, 100% 1px; }
    .lab { display: flex; align-items: center; gap: 5px; height: 16px; }
    .lab.cur { background: #d9d9d9; }
    .book { width: 13px; height: 15px; margin-left: 2px; flex: none; }
    .vs { display: flex; flex-direction: column; align-items: center; background: #f0f0f0; }
    .vs .cv { margin: 3px 0; flex: none; }
    .vs .tr { flex: 1; width: 100%; position: relative; }
    .thumb { position: absolute; left: 0; right: 0; background: #cdcdcd; }
    .tree .thumb { top: 49%; bottom: 0; }
    .list .thumb { top: 77%; bottom: 0; }
    .page .thumb { top: 0; bottom: 28%; }
    .hs { display: flex; align-items: center; padding: 0 4px; gap: 4px; }
    .hs i { flex: 1; height: 15px; background: #cdcdcd; margin-right: 5px; }
    .right { flex: 1; min-width: 0; display: flex; flex-direction: column; padding-left: 6px; }
    .tb2 { height: 28px; padding-left: 4px; margin-top: 1px; gap: 6px; flex: none; }
    .lv { width: 62px; height: 24px; background: #fff; display: flex; align-items: center; padding: 0 4px 0 2px; }
    .lv select { flex: 1; min-width: 0; }
    .panes { flex: 1; min-height: 0; display: flex; gap: 4px; padding-top: 1px; }
    .finder { width: 183px; display: flex; flex-direction: column; flex: none; background: #fff; border-right: 1px solid #828790; }
    .find { display: flex; align-items: center; gap: 5px; padding: 2px 0 0 1px; height: 29px; flex: none; }
    .find input { width: 157px; height: 24px; border: 1px solid #6e6e6e; background: #fff; padding: 0 0 2px 2px; font-family: "Noto Sans CJK SC", sans-serif; }
    .find input::placeholder { color: #7c7c7c; opacity: 1; }
    .list { flex: 1; min-height: 0; border: 1px solid #828790; border-right: 0; display: flex; margin-bottom: 1px; }
    .list .rows { flex: 1; }
    .list .vs { width: 16px; margin-right: 1px; }
    .list .elbow { margin-left: 31px; width: 9px; }
    .list .lab { padding: 0 4px 0 1px; }
    .list .lab.cur { background: #316ac5; }
    .prop { flex: 1; min-width: 0; display: flex; flex-direction: column; background: #fff; margin-top: -1px; }
    .ptab { width: 64px; height: 20px; border: 1px solid #d9d9d9; border-bottom: 0; background: #fff; flex: none; }
    .page { flex: 1; min-height: 0; border: 1px solid #d9d9d9; padding: 4px 2px 2px 3px; margin-right: 3px; position: relative; display: flex; }
    .frame { flex: 1; border: 1px solid #828790; display: flex; overflow: hidden; min-width: 0; }
    .frame .vs { width: 15px; }
    .sheet { flex: 1; min-width: 0; }
    table { border-collapse: collapse; width: 100%; table-layout: fixed; }
    th, td { height: 19px; padding: 0; border: 1px solid #c8c8c8; border-top: 0; font-weight: 400; text-align: left; line-height: 16px; }
    thead th { height: 23px; background: linear-gradient(#fcfcfc, #ececec); }
    .no { width: 22px; text-align: center; background: #f4f4f4; }
    tbody td { padding-left: 18px; }
    .sel .no { background: #ffd28c; color: #700050; }
    .sel td { background: #0078d7; color: #fff; }
    .key td { color: #00f; }
    .dim td { color: #808080; }
    section-window { position: absolute; left: 80px; top: 0; right: 18px; bottom: 1px; }
    .status { display: flex; gap: 2px; padding-top: 3px; height: 23px; flex: none; }
    .status div { border: 1px solid #d0d0d0; background: linear-gradient(#fff, #f3f3f3); padding: 1px; white-space: nowrap; }
    .s1 { width: 148px; } .s2 { width: 78px; } .s3 { width: 98px; } .s4 { width: 48px; } .s5 { flex: 1; } .s6 { width: 70px; }
    .taskbar { display: flex; height: 40px; background: #020c0f; color: #f0f0f0; flex: none; align-items: center; }
    .start { width: 48px; height: 40px; background: #000; display: flex; align-items: center; justify-content: center; }
    .start svg { width: 16px; height: 16px; }
    .cortana { width: 344px; height: 40px; background: #333; display: flex; align-items: center; padding: 0 14px 0 8px; gap: 5px; }
    .cortana input { flex: 1; min-width: 0; font-size: 14px; font-family: "Noto Sans CJK SC", sans-serif; }
    .cortana input::placeholder { color: #9a9a9a; opacity: 1; }
    .ring { width: 23px; height: 23px; } .mic { width: 14px; height: 20px; }
    .apps { display: flex; gap: 2px; flex: 1; }
    .app { width: 48px; height: 40px; display: flex; align-items: center; justify-content: center; }
    .app svg { width: 26px; height: 26px; }
    .app.run { background: linear-gradient(#76b9ed, #76b9ed) center bottom / 40px 2px no-repeat; }
    .app.act { background: linear-gradient(#76b9ed, #76b9ed) center bottom / 48px 2px no-repeat #343c40; }
    .tray { display: flex; align-items: center; gap: 8px; }
    .tray svg { width: 16px; height: 16px; flex: none; display: block; }
    .tray .kb { width: 23px; height: 14px; }
    .lang { margin: 0 4px; }
    .clock { text-align: right; width: 62px; line-height: 19px; margin-left: 2px; }
    .clock time { display: block; padding-right: 10px; }
    .clock time + time { padding: 0; }
    .tray .act { width: 18px; height: 18px; margin: 0 12px 0 14px; }
    .desk { width: 5px; height: 40px; border-left: 1px solid #444; }
    .ball { position: absolute; left: 779px; top: -26px; width: 46px; height: 46px; border-radius: 23px; background: radial-gradient(#45cf62 60%, #2fb24c); border: 2px solid #e4efe6; box-shadow: 0 1px 4px #888; color: #fff; font-weight: bold; text-align: center; padding-top: 23px; }
    .ime1 { position: absolute; left: 721px; top: 25px; }
    .ime2 { position: absolute; left: 983px; top: 3px; }
    grid-dialog { position: absolute; left: 322px; top: 311px; width: 411px; height: 223px; }
    .mark { position: absolute; left: 396px; top: 120px; width: 196px; height: 110px; pointer-events: none; }
  `];
  render() {
    const menus = ["文件(F)", "编辑(E)", "楼层(L)", "构件(N)", "绘图(D)", "修改(M)", "钢筋量(Q)", "视图(V)", "工具(T)", "云应用(Y)", "BIM应用(I)", "在线服务(S)", "帮助(H)"];
    const g2: Tool[] = [{ i: "paint", t: "绘图" }, { i: "sigma", t: "汇总计算" }, { i: "cloud", t: "云检查" }, { i: "slab", t: "平齐板顶", off: true }, { i: "binoc", t: "查找图元", off: true }, { i: "glasses", t: "查看钢筋量", off: true }, { i: "batch", t: "批量选择", off: true }];
    const g3: (Tool | "|")[] = [{ i: "cube", t: "俯视", off: true, a: "w" }, { i: "orbit", t: "动态观察", off: true }, { i: "local", t: "局部三维", off: true }, "|", { i: "full", t: "全屏", off: true }, { i: "zoom", t: "缩放", off: true, a: "w" }, { i: "pan", t: "平移", off: true, a: "w" }, { i: "rot", t: "屏幕旋转", off: true, a: "n" }, "|", { i: "floor", t: "选择楼层", off: true }];
    const r2a: (Tool | "|")[] = [{ i: "add", t: "新建", a: "n" }, { i: "del", t: "删除" }, { i: "copy", t: "复制" }, { i: "rename", t: "重命名" }, "|"];
    const r2b: (Tool | "|")[] = ["|", { i: "sort", t: "排序", a: "n" }, { i: "filter", t: "过滤", a: "n" }, "|", { i: "fromf", t: "从其他楼层复制构件" }, { i: "tof", t: "复制构件到其他楼层" }, "|", { t: "查找", a: "w" }, "|", { i: "up", t: "上移" }, { i: "down", t: "下移", off: true }];
    const more = html`<span class="more">»</span>`;
    const vs = html`<div class="vs">${chev("up")}<div class="tr"><div class="thumb"></div></div>${chev("down")}</div>`;
    const runs = ["green", "gblue", "note", "pdf"];
    return html`
      <header class="titlebar">${ic("app")}<span class="name">${latin("广联达BIM钢筋算量软件 GGJ2013 - [C:\\Users\\Administrator.PC-20141127NRHM\\Desktop\\白龙村-2018-02-02-19-24-35(2666版).GGJ12]", "l")}</span>
        <button class="wc" aria-label="最小化"><svg viewBox="0 0 11 11"><path d="M.5 5.500h10" stroke="#888"/></svg></button>
        <button class="wc" aria-label="还原"><svg viewBox="0 0 11 11"><path d="M.5 2.500h8v8h-8zM2.500 2V.5h8v8H9" fill="none" stroke="#888"/></svg></button>
        <button class="wc" aria-label="关闭"><svg viewBox="0 0 11 11"><path d="m.5.5 10 10M10.500.5l-10 10" stroke="#888"/></svg></button>
      </header>
      <div class="menus"><nav>${menus.map((m) => html`<button>${m}</button>`)}</nav><span class="tail">\\二</span>
        <div class="bar tip">多边形编辑器的网格尺..</div>
        <div class="bar acct">${ic("user")}<span>13907298339</span><span class="drop w">${arrow}</span><span></span><span>造价豆:0</span>${ic("bell")}${more}</div></div>
      <div class="row1">
        <div class="bar f1">${tool({ i: "doc" })}${tool({ i: "open", a: "n" })}${tool({ i: "save" })}<span class="sep"></span>${tool({ i: "undo", a: "w" })}${more}</div>
        <div class="bar f2">${g2.map(tool)}${more}</div>
        <div class="bar f3"><div class="dim2">${ic("flat")}<select aria-label="视图" disabled><option>二维</option></select>${arrow}</div>${g3.map(tool)}${more}</div>
      </div>
      <div class="lower">
        <aside class="nav">
          <h2><span>模块导航栏</span><svg viewBox="0 0 12 12"><path d="M3.500 1.500h5v5h-5zM2 7h8M6 7v4M7.500 2v5" stroke="#111" fill="none"/></svg><svg viewBox="0 0 12 12"><path d="m2 2 8 8M10 2l-8 8" stroke="#111"/></svg></h2>
          <button class="big">工程设置</button><button class="big">绘图输入</button>
          <div class="exp"><svg viewBox="0 0 42 18"><path d="M4.500 0v9M0 4.500h9M11.500 7v10M7 12h9M23 4.500h9M30 10.500h9" stroke="#042c2c" stroke-width="4"/><path d="M4.500 1v7M1 4.500h7M11.500 8v8M8 12h7M24 4.500h7M31 10.500h7" stroke="#0d8a84" stroke-width="1.500"/></svg></div>
          <div class="tree"><div class="rows">${tree.map(([n, open, kids]) => html`
            <div class="r p">${open ? chev("down") : html`<span class="shut">${chev("right")}</span>`}<span class="dots"></span><span class="lab">${ic(open ? "folder" : "folderc")}${n}</span></div>
            ${kids.map(([i, t], k) => html`<div class="r"><span class=${classMap({ rail: true, on: n !== "自定义" })}></span><span class=${classMap({ elbow: true, end: k === kids.length - 1 })}></span><span class=${classMap({ lab: true, cur: i === "poly" })}>${ic(i)}<span>${mono(t)}</span></span>${i === "poly" ? html`<svg class="book" viewBox="0 0 13 15"><path d="M0 0h13v15H0z" fill="#3a9ae0"/><path d="M2 2h4v11H2zM7.500 2h4v11h-4z" fill="#e8f5ff"/><path d="M3 4.500h2M3 7h2M3 9.500h2M8.500 4.500h2M8.500 7h2M8.500 9.500h2" stroke="#2a7cc8"/></svg>` : nothing}</div>`)}`)}</div>
            ${vs}<div class="hs">${chev("left")}<i></i>${chev("right")}</div></div>
          <button class="big">单构件输入</button><button class="big">报表预览</button>
        </aside>
        <div class="right">
          <div class="bar tb2">${r2a.map(tool)}<label for="lv">楼层</label><span class="lv"><select id="lv"><option>第6层</option></select>${arrow}</span>${r2b.map(tool)}</div>
          <div class="panes">
            <div class="finder">
              <div class="find"><input placeholder="搜索构件..." aria-label="搜索构件" /><button aria-label="搜索">${ic("search")}</button></div>
              <div class="list"><div class="rows">${parts.map((n, k) => html`<div class="r"><span class=${classMap({ elbow: true, end: k === 33 })}></span><span class=${classMap({ lab: true, cur: n === 145 })}>${ic("gear")}${mono("ZDYX-" + n)}</span></div>`)}</div>${vs}</div>
            </div>
            <div class="prop"><button class="ptab">属性编辑</button>
              <div class="page"><div class="frame"><div class="sheet"><table><thead><tr><th class="no"></th><th></th></tr></thead><tbody>
                ${props.map(([t, c], k) => html`<tr class=${c}><th class="no">${mono(String(k + 1))}</th><td>${t}</td></tr>`)}</tbody></table></div>${vs}</div>
                <section-window></section-window></div></div>
          </div>
        </div>
      </div>
      <div class="status"><div class="s1"></div><div class="s2">${mono("层高:2.8m")}</div><div class="s3">${mono("底标高:17.55m")}</div><div class="s4">${mono("0")}</div><div class="s5">名称在当前层当前构件类型下不允许重名</div><div class="s6">${mono("433.4 FPS")}</div></div>
      <footer class="taskbar">
        <button class="start" aria-label="开始"><svg viewBox="0 0 16 16"><path d="M0 2.300 7 1.300v6.200H0zM8 1.200 16 0v7.500H8zM0 8.500h7v6.200l-7-1zM8 8.500h8V16l-8-1.200z" fill="#fff"/></svg></button>
        <div class="cortana"><svg class="ring" viewBox="0 0 23 23"><circle cx="11.500" cy="11.500" r="9" fill="none" stroke="#f2f2f2" stroke-width="2.500"/></svg><input placeholder="在这里输入你要搜索的内容" aria-label="搜索" /><svg class="mic" viewBox="0 0 14 20"><path d="M4.500 3.500a2.500 2.500 0 0 1 5 0v7a2.500 2.500 0 0 1-5 0zM2 9v2a5 5 0 0 0 10 0V9M7 16v3M4 18.500h6" fill="none" stroke="#9a9a9a" stroke-width="1.300"/></svg></div>
        <div class="apps">${Object.keys(task).map((k) => html`<button class=${classMap({ app: true, run: runs.includes(k), act: k === "glo" })} aria-label=${k}><svg viewBox="0 0 26 26">${task[k]}</svg></button>`)}</div>
        <div class="tray"><span>链接</span>
          <svg viewBox="0 0 16 16"><path d="m2.500 10.500 5.500-5 5.500 5" fill="none" stroke="#eee" stroke-width="1.400"/></svg>
          <svg viewBox="0 0 16 16"><path d="M1.500 12.500C4 10 3 8 3.500 5.500a4.500 4.500 0 0 1 9 0C13 8 12 10 14.500 12.500zM6 13.500h4L8 15z" fill="#fff"/></svg>
          <svg viewBox="0 0 16 16"><path d="M5 4.500h9v7H5zM14.500 6.500h1v3h-1M1 3v3h3V3M2.500 6v5H5" fill="none" stroke="#eee" stroke-width="1.300"/><path d="M7 6h5v4H7z" fill="#eee"/></svg>
          <svg viewBox="0 0 16 16"><path d="M2 14A12 12 0 0 1 14 3M5 14a9 9 0 0 1 9-8M8 14a6 6 0 0 1 6-5" fill="none" stroke="#aaa" stroke-width="1.300"/><path d="M10.500 14a3.500 3.500 0 0 1 3.500-3v3z" fill="#fff"/></svg>
          <svg viewBox="0 0 16 16"><path d="M.5 6v4.500h2.500l3.500 3v-10.500L3 6zM8.500 6c1 1 1 3.500 0 4.500M10.500 4.500c2 2 2 5.500 0 7.500M12.500 3c3 3 3 7.500 0 10.500" fill="none" stroke="#eee"/></svg>
          <svg class="kb" viewBox="0 0 23 14"><path d="M.5.5h22v13H.5z" fill="none" stroke="#eee"/><path d="M3 3.500h17M3 6h17M3 8.500h17" stroke="#eee" stroke-dasharray="1.500 1"/><path d="M6 11h11" stroke="#eee"/></svg>
          <span class="lang">中</span><svg viewBox="0 0 28 28">${sogou}</svg>
          <div class="clock"><time>17:50</time><time>2018/8/5</time></div>
          <svg class="act" viewBox="0 0 18 18"><path d="M1.500 2.500h15v11h-5L9 16l-2.500-2.500h-5z" fill="none" stroke="#eee" stroke-width="1.200"/></svg><span class="desk"></span></div>
      </footer>
      <div class="ball">69</div><ime-bar class="ime1"></ime-bar><ime-bar class="ime2"></ime-bar>
      <grid-dialog></grid-dialog>
      <svg class="mark" viewBox="0 0 196 110"><ellipse cx="98" cy="55" rx="92" ry="49" fill="none" stroke="#f00" stroke-width="8"/></svg>`;
  }
}
